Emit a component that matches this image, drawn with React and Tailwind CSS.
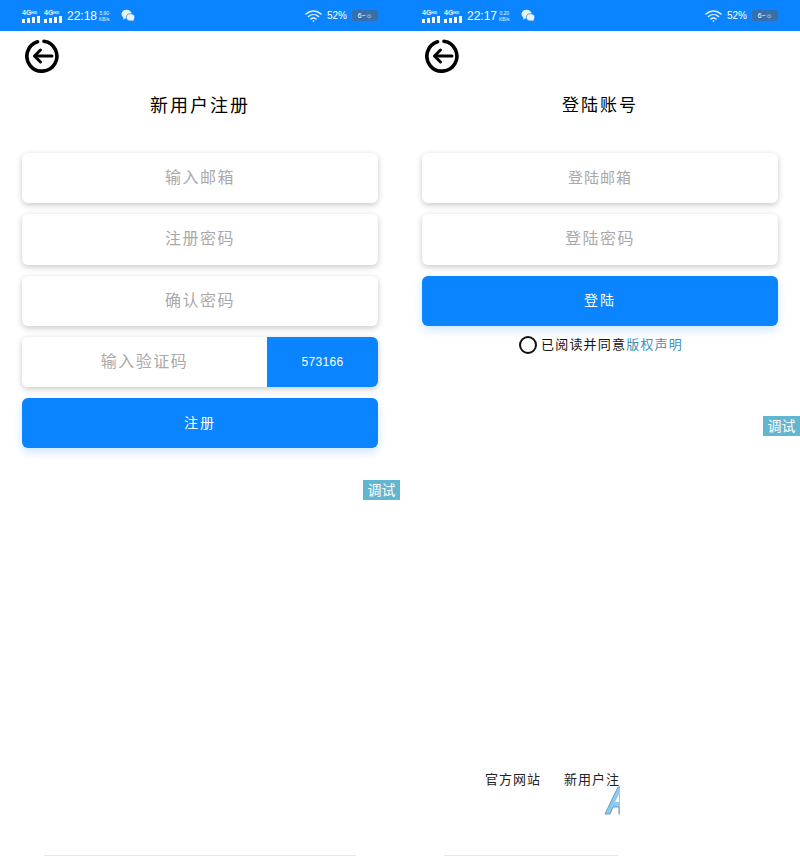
const fontStack = "font-['Liberation_Sans','Noto_Sans_CJK_SC',sans-serif]";

const SignalIcon = () => (
  <div className="flex flex-col items-start w-[18px]">
    <span className="text-[7px] leading-[7px] font-bold text-white/90 whitespace-nowrap">4G<span className="text-[4px] align-top">HD</span></span>
    <div className="flex items-end gap-[2px] h-[7px]">
      <span className="w-[3px] h-[4px] bg-white" />
      <span className="w-[3px] h-[5px] bg-white" />
      <span className="w-[3px] h-[6px] bg-white" />
      <span className="w-[3px] h-[7px] bg-white" />
    </div>
  </div>
);

const WechatIcon = () => (
  <svg width="14" height="13" viewBox="0 0 15 14" fill="#e8f3ff">
    <ellipse cx="6" cy="5.5" rx="5.5" ry="4.8" />
    <ellipse cx="10.2" cy="9" rx="4.6" ry="3.9" stroke="#0a84ff" strokeWidth="0.8" />
    <path d="M3 9l-.6 2.6L5 10z" />
    <path d="M12 12l1.4 1.4-.2-2.4z" />
  </svg>
);

const WifiIcon = () => (
  <svg width="17" height="14" viewBox="0 0 18 14" fill="none" stroke="#e8f3ff" strokeWidth="1.5" strokeLinecap="round">
    <path d="M1 4.8C5.6.6 12.4.6 17 4.8" />
    <path d="M3.6 7.6c3.2-2.8 7.6-2.8 10.8 0" />
    <path d="M6.2 10.2c1.7-1.3 3.9-1.3 5.6 0" />
    <circle cx="9" cy="12.4" r="0.9" fill="#e8f3ff" stroke="none" />
  </svg>
);

const StatusBar = ({ time, speed }) => (
  <div className="h-[31px] bg-[#0a84ff] flex items-center text-white pl-[22px] pr-[22px]">
    <div className="flex items-center gap-[4px]">
      <SignalIcon />
      <SignalIcon />
    </div>
    <span className="ml-[5px] text-[12px] font-medium w-[29px] whitespace-nowrap">{time}</span>
    <div className="ml-[3px] flex flex-col items-center text-[5px] leading-[6px] text-white/90">
      <span>{speed}</span>
      <span>KB/s</span>
    </div>
    <div className="ml-[11px]">
      <WechatIcon />
    </div>
    <div className="ml-auto flex items-center">
      <WifiIcon />
      <span className="ml-[5px] text-[10px] font-medium">52%</span>
      <div className="ml-[5px] w-[26px] h-[11px] rounded-[3px] bg-[#3a6ea8] flex items-center justify-center text-[7px] leading-none text-white">
        6~☼
      </div>
    </div>
  </div>
);

const BackButton = () => (
  <div className="pl-[25px] pt-[8px] h-[42px]">
    <svg width="34" height="34" viewBox="0 0 34 34" fill="none" stroke="#000" strokeLinecap="round" strokeLinejoin="round">
      <path d="M19 2.3A15 15 0 1 1 12.5 2.8" strokeWidth="3.6" />
      <path d="M27 17H10" strokeWidth="3" />
      <path d="M15.5 11L9.5 17l6 6" strokeWidth="3" />
    </svg>
  </div>
);

const Field = ({ label, size = "text-[16px] tracking-[1.5px]" }) => (
  <div className={`h-[50.25px] bg-white rounded-[6px] shadow-[0_2px_6px_rgba(0,0,0,0.22)] flex items-center justify-center text-[#a9a9a9] ${size}`}>
    {label}
  </div>
);

const PrimaryButton = ({ label }) => (
  <div className="h-[50.25px] bg-[#0a84ff] rounded-[6px] shadow-[0_4px_10px_rgba(10,132,255,0.2)] flex items-center justify-center text-[14px] tracking-[2px] text-white">
    {label}
  </div>
);

const DebugTag = ({ className }) => (
  <div className={`absolute right-0 w-[37px] h-[20px] bg-[#62b6d2] flex items-center justify-center text-[14px] leading-none text-white ${className}`}>
    调试
  </div>
);

const Screen = ({ time, speed, title, titleSize, children }) => (
  <div className="relative h-[858px] w-[400px] bg-white overflow-hidden">
    <StatusBar time={time} speed={speed} />
    <BackButton />
    <h1 className={`mt-[20px] h-[26px] text-center leading-[26px] text-black font-normal ${titleSize}`}>
      {title}
    </h1>
    {children}
  </div>
);

export default function App() {
  return (
    <div className={`grid grid-cols-2 w-[800px] h-[858px] bg-white ${fontStack}`}>
      {/* Register */}
      <Screen time="22:18" speed="5.90" title="新用户注册" titleSize="text-[18px] tracking-[2px]">
        <div className="mt-[34px] mx-[22px] flex flex-col gap-[11px]">
          <Field label="输入邮箱" />
          <Field label="注册密码" />
          <Field label="确认密码" />
          <div className="h-[50.25px] flex rounded-[6px] overflow-hidden shadow-[0_2px_6px_rgba(0,0,0,0.22)]">
            <div className="w-[245px] bg-white flex items-center justify-center text-[16px] tracking-[1.5px] text-[#a9a9a9]">
              输入验证码
            </div>
            <div className="flex-1 bg-[#0a84ff] flex items-center justify-center text-[12px] tracking-[0.3px] text-white">
              573166
            </div>
          </div>
          <PrimaryButton label="注册" />
        </div>
        <DebugTag className="top-[480px]" />
        <div className="absolute left-[44px] right-[44px] top-[855px] h-[3px] border-t border-[#e8e8e8]" />
      </Screen>

      {/* Login */}
      <Screen time="22:17" speed="0.20" title="登陆账号" titleSize="text-[17px] tracking-[2px]">
        <div className="mt-[34px] mx-[22px] flex flex-col gap-[11px]">
          <Field label="登陆邮箱" size="text-[15px] tracking-[1px]" />
          <Field label="登陆密码" />
          <PrimaryButton label="登陆" />
        </div>
        <div className="mt-[9px] flex items-center justify-center pl-[2px] text-[13px] leading-[20px] tracking-[1.2px] text-[#111]">
          <span className="w-[18px] h-[18px] rounded-full border-2 border-[#111] mr-[4px]" />
          <span>已阅读并同意</span>
          <span className="text-[#3f93b8]">版权声明</span>
        </div>
        <DebugTag className="top-[416px]" />

        {/* Footer stops short at x=220, as in the picture */}
        <div className="absolute left-[85px] top-[771px] whitespace-nowrap flex gap-[23px] text-[13px] leading-[18px] tracking-[1px] text-[#222]">
          <span>官方网站</span>
          <span>新用户注</span>
        </div>
        <div className="absolute left-[204px] top-[786px] w-[16px] h-[30px] overflow-hidden">
          <svg width="26" height="30" viewBox="0 0 26 30">
            <path d="M1 28L14 1h7v27h-6v-7H9l-3 7z" fill="#8fc9ec" stroke="#5f9fc9" strokeWidth="1" />
            <path d="M11 16h4V8z" fill="#fff" />
          </svg>
        </div>
        <div className="absolute left-[44px] w-[174px] top-[855px] h-[3px] border-t border-[#e8e8e8]" />
      </Screen>
    </div>
  );
}
